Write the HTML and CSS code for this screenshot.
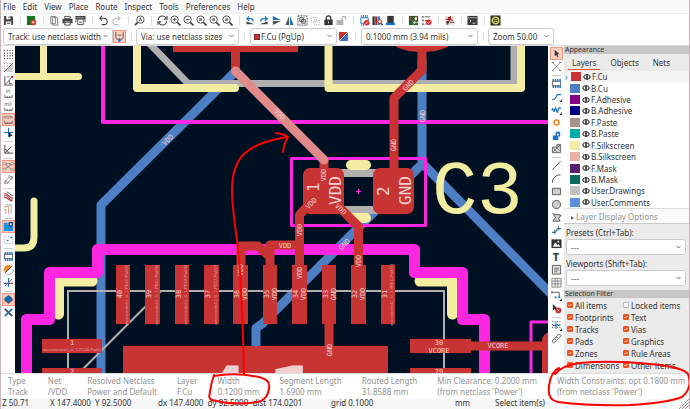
FILE: index.html
```html
<!DOCTYPE html>
<html lang="en">
<head>
    <meta charset="UTF-8">
    <meta name="viewport" content="width=device-width, initial-scale=1.0">
    <title>PCB Editor</title>
    <link rel="stylesheet" href="styles.css">
</head>
<body>
    <!-- icon set -->
    <svg class="sprite" aria-hidden="true">
        <symbol id="save" viewBox="0 0 12 12"><path d="M1 1h8.500L11 2.500V11H1z" fill="#444"/><path d="M3.500 1h4.500v3.500H3.500zM3 7h6v4H3z" fill="#fff"/><path d="M6 1.500h1.200v2H6zM4 8.500h4v1H4z" fill="#444"/></symbol>
        <symbol id="setup" viewBox="0 0 12 12"><path d="M1 1h9v10H1z" fill="#16781f"/><path d="M2 4h3l2 2M2 9h2l1-2" stroke="#062" fill="none"/><circle cx="8" cy="8" r="3.200" fill="#d33"/><circle cx="8" cy="8" r="1.200" fill="#fff"/></symbol>
        <symbol id="page" viewBox="0 0 12 12"><path d="M2 1.500h5v8H2zM4 2.500h5.500v8.500H4z" fill="#fff" stroke="#777"/></symbol>
        <symbol id="print" viewBox="0 0 12 12"><path d="M3 1.500h6V4H3zM3 8h6v3H3z" fill="#fff" stroke="#444"/><path d="M.5 4h11v5H9V7H3v2H.5z" fill="#444"/></symbol>
        <symbol id="plot" viewBox="0 0 12 12"><path d="M.5 1h11v4H.5z" fill="#444"/><path d="M2 3h8" stroke="#fff" stroke-dasharray="1 1"/><path d="M3 5v5.500h6V5M4.500 8h3" fill="none" stroke="#444"/><path d="M1 5v3M11 5v3" stroke="#444"/></symbol>
        <symbol id="undo" viewBox="0 0 12 12"><path d="M4.500 1 2 3.500 4.500 6M2 3.500h4.500a3.500 3.500 0 0 1 0 7H4" fill="none" stroke="#444" stroke-width="1.200"/></symbol>
        <symbol id="redo" viewBox="0 0 12 12"><path d="M7.500 1 10 3.500 7.500 6M10 3.500H5.500a3.500 3.500 0 0 0 0 7H8" fill="none" stroke="#bbb" stroke-width="1.200"/></symbol>
        <symbol id="find" viewBox="0 0 12 12"><circle cx="7" cy="5" r="4" fill="none" stroke="#444"/><path d="M4 8 1 11" stroke="#444" stroke-width="1.800"/><path d="m5.500 7 1.500-4 1.500 4M6 5.500h2" fill="none" stroke="#444" stroke-width=".8"/></symbol>
        <symbol id="refresh" viewBox="0 0 12 12"><path d="M1.500 5.500a4.500 4.500 0 0 1 8.500-2M11 1V4.500H7.500M10.500 6.500A4.500 4.500 0 0 1 2 8.500M1 11V7.500h3.500" fill="none" stroke="#444" stroke-width="1.100"/></symbol>
        <symbol id="lens" viewBox="0 0 12 12"><circle cx="5" cy="5" r="4" fill="none" stroke="#444"/><path d="m8 8 3.500 3.500" stroke="#444" stroke-width="1.800"/></symbol>
        <symbol id="zin" viewBox="0 0 12 12"><use href="#lens"/><path d="M3 5h4M5 3v4" stroke="#444"/></symbol>
        <symbol id="zout" viewBox="0 0 12 12"><use href="#lens"/><path d="M3 5h4" stroke="#444"/></symbol>
        <symbol id="zfit" viewBox="0 0 12 12"><use href="#lens"/><path d="M3.500 3.500h3v3h-3z" fill="#777"/></symbol>
        <symbol id="ccw" viewBox="0 0 12 12"><path d="M1.500 10V7l9 3z" fill="#444"/><path d="M2 4h4a3 3 0 0 1 3 3M4.500 1.500 2 4l2.500 2.500" fill="none" stroke="#1873c7" stroke-width="1.300"/></symbol>
        <symbol id="cw" viewBox="0 0 12 12"><path d="M10.500 10V7l-9 3z" fill="#444"/><path d="M10 4H6a3 3 0 0 0-3 3M7.500 1.500 10 4 7.500 6.500" fill="none" stroke="#1873c7" stroke-width="1.300"/></symbol>
        <symbol id="flipv" viewBox="0 0 12 12"><path d="M2 1v4.500h9z" fill="#1873c7"/><path d="M2 11V6.500h9z" fill="#555"/></symbol>
        <symbol id="fliph" viewBox="0 0 12 12"><path d="M5.500 1v10H1.500z" fill="#555"/><path d="M6.500 1v10h4z" fill="#1873c7"/></symbol>
        <symbol id="group" viewBox="0 0 12 12"><path d="M1 1h10v10H1z" fill="none" stroke="#444" stroke-dasharray="2 1"/><path d="M3 3h4v4H3zM5 5h4v4H5z" fill="#ddd" stroke="#555"/></symbol>
        <symbol id="ungroup" viewBox="0 0 12 12"><path d="M1.500 2.500h6v5h-6zM4.500 5.500h6v5h-6z" fill="none" stroke="#aaa" stroke-dasharray="1 1"/></symbol>
        <symbol id="lock" viewBox="0 0 12 12"><path d="M3.500 6V3.500a2.500 2.500 0 0 1 5 0V6" fill="none" stroke="#333" stroke-width="1.300"/><path d="M1.500 5h9v6h-9z" fill="#333"/><path d="M5.500 7h1v2h-1z" fill="#fff"/></symbol>
        <symbol id="unlock" viewBox="0 0 12 12"><path d="M6.500 6V3.500a2 2 0 0 1 4 0V5" fill="none" stroke="#aaa" stroke-width="1.300"/><path d="M.5 5.500H8V11H.5z" fill="#b4b4b4"/></symbol>
        <symbol id="fpedit" viewBox="0 0 12 12"><path d="M2 3h8v6H2z" fill="#fff" stroke="#1873c7"/><path d="M3 0v3M5 0v3M7 0v3M9 0v3M3 9v3M5 9v3" stroke="#1873c7"/><circle cx="8.500" cy="8.500" r="3" fill="#d22"/><path d="m7 10 3-3" stroke="#fff"/></symbol>
        <symbol id="library" viewBox="0 0 12 12"><path d="M.5 1.500h2.500V11H.5z" fill="#333"/><path d="M3.500 1.500h2V11h-2z" fill="#a22"/><path d="M6 1.500h2.500V11H6z" fill="#1873c7"/><circle cx="8.500" cy="7" r="2" fill="#fff" stroke="#a22"/><path d="m9.500 9 2 2" stroke="#333" stroke-width="1.500"/></symbol>
        <symbol id="update" viewBox="0 0 12 12"><path d="M2.500 1h7v8h-7z" fill="#333"/><path d="M1 8.500h10V11H1z" fill="#1873c7"/></symbol>
        <symbol id="board" viewBox="0 0 12 12"><path d="M1 1h10v10H1z" fill="#285c2a"/><path d="M3 2v3l3 3v3M9 1v4" stroke="#d54" fill="none"/><circle cx="8.500" cy="4" r="1.500" fill="#eee"/><path d="M6 8h5M8 6l-2 2 2 2" stroke="#eee" fill="none"/></symbol>
        <symbol id="drc" viewBox="0 0 12 12"><path d="M1 1h2v2H1zM1 5h2v2H1zM1 9h2v2H1z" fill="#777"/><path d="M4 2h6M4 6h3M4 10h2" stroke="#555"/><circle cx="8.500" cy="8" r="3" fill="#d22"/><path d="m7 8 1.200 1.200L10 7" fill="none" stroke="#fff"/></symbol>
        <symbol id="plugin" viewBox="0 0 12 12"><path d="M1 1h10v10H1z" fill="#e8ddd4"/><path d="M2 5h3l2 3h4M7 1v4l3 1M4 11V8" fill="none" stroke="#823"/><circle cx="6" cy="4" r="2" fill="#a22"/><circle cx="4" cy="8" r="1.500" fill="#333"/></symbol>
        <symbol id="console" viewBox="0 0 12 12"><path d="M.5 1h11v10H.5z" fill="#3c3c3c"/><path d="M1 3h10" stroke="#aaa"/><path d="m3 5 1.500 1.500L3 8M6 9h3" fill="none" stroke="#fff" stroke-width=".8"/></symbol>
        <symbol id="coil" viewBox="0 0 12 12"><path d="M.5.5h11v11H.5z" fill="#24371d"/><circle cx="6" cy="6" r="3.500" fill="none" stroke="#d8c86c" stroke-width="1.800"/><path d="M4 5h4M4 7h4" stroke="#d8c86c"/></symbol>

        <symbol id="grid" viewBox="0 0 12 12"><path d="M1 1.500h10M1 4.500h10M1 7.500h10M1 10.500h10" stroke="#444" stroke-width="1.200" stroke-dasharray="1.200 1.800"/></symbol>
        <symbol id="gridover" viewBox="0 0 12 12"><path d="M11 1v10H1z" fill="#ccc"/><path d="M1 1.500h8M1 4.500h6M1 7.500h3" stroke="#666" stroke-dasharray="1 2"/><path d="M1 11 11 1" stroke="#666"/></symbol>
        <symbol id="polar" viewBox="0 0 12 12"><path d="M2 1v10h9M2 11l7-8" fill="none" stroke="#555"/><path d="M4.500 2h2M7 6v4M7 9.500h3" stroke="#555"/><circle cx="10" cy="2" r="1.300" fill="#d22"/></symbol>
        <symbol id="ruler" viewBox="0 0 12 6"><path d="M1.500 1v3h9V1M4.500 2.500V4M7.500 2.500V4" fill="none" stroke="#555"/></symbol>
        <symbol id="cross" viewBox="0 0 12 12"><path d="M6 1v10M1 6h10" stroke="#1873c7" stroke-width="1.200"/><path d="m6 5 4.500 4.500-2 .2L7 12z" fill="#222"/></symbol>
        <symbol id="angle" viewBox="0 0 12 12"><path d="M2 1v9h9M2 10l7-7M2 6q4 0 4 4" fill="none" stroke="#444"/></symbol>
        <symbol id="rats" viewBox="0 0 12 12"><path d="m2 3 8 7M2 9l8-6M3 3h6" stroke="#666" stroke-width=".8"/><circle cx="2" cy="3" r="1.300" fill="#fff" stroke="#666" stroke-width=".7"/><circle cx="10" cy="3" r="1.300" fill="#fff" stroke="#666" stroke-width=".7"/><circle cx="2" cy="9" r="1.300" fill="#fff" stroke="#666" stroke-width=".7"/><circle cx="10" cy="9.500" r="1.300" fill="#fff" stroke="#666" stroke-width=".7"/></symbol>
        <symbol id="curved" viewBox="0 0 12 12"><path d="M2 10c0-4 5-4 5-9M5 11c0-4 5-4 5-9" fill="none" stroke="#888"/><circle cx="3" cy="9" r="1.500" fill="none" stroke="#888"/><circle cx="9" cy="4" r="1.500" fill="none" stroke="#888"/></symbol>
        <symbol id="contrast" viewBox="0 0 12 12"><path d="M1 3c4-2 5 5 10 5M1 7c3-2 5 4 9 4" fill="none" stroke="#c33" stroke-width="1.300"/><path d="M1 5c4-2 5 5 10 5M4 1c2 0 4 4 7 4" fill="none" stroke="#555"/></symbol>
        <symbol id="netcol" viewBox="0 0 12 12"><path d="M1 3h5v8M1 6h2v5" fill="none" stroke="#e6a08c" stroke-width="1.200"/><path d="M3 1h6v10" fill="none" stroke="#9bb" stroke-width="1.200"/></symbol>
        <symbol id="zone" viewBox="0 0 12 12"><path d="M1 2h4v2h6v7H1z" fill="#1a8fe0"/><path d="M6 1h5v5H6z" fill="#135a93"/><circle cx="8.500" cy="3.500" r="1" fill="#fff"/></symbol>
        <symbol id="zoneout" viewBox="0 0 12 12"><path d="M1.500 2.500h9v8h-9z" fill="none" stroke="#8ac" stroke-dasharray="1 1"/><path d="M4 7h2M8 4h2" stroke="#1873c7" stroke-width="1.500"/></symbol>
        <symbol id="fp" viewBox="0 0 12 12"><path d="M1.500 3.500h9v5h-9z" fill="#fff" stroke="#555"/><path d="M2.500 1v3M5 1v3M7.500 1v3M10 1v3M2.500 8v3M5 8v3M7.500 8v3M10 8v3" stroke="#1873c7" stroke-width="1.500"/></symbol>
        <symbol id="padout" viewBox="0 0 12 12"><path d="M2 9a5 5 0 0 1 8-6z" fill="#f08a24"/><path d="m2 10 8-8" stroke="#444"/><path d="M4 11a5 5 0 0 0 7-6" fill="none" stroke="#999"/></symbol>
        <symbol id="trackout" viewBox="0 0 12 12"><path d="M6 1v10M1 7h10" stroke="#1873c7" stroke-width="1.300"/><path d="m2 10 8-8M7 7h4" stroke="#d44"/></symbol>
        <symbol id="layers" viewBox="0 0 12 12"><path d="m6 4 5 3-5 4-5-4z" fill="#d54"/><path d="m6 1 4.500 3.500v2L6 10 1.500 6.500v-2z" fill="#1368ae"/></symbol>
        <symbol id="tools" viewBox="0 0 12 12"><path d="m2 2 8 8" stroke="#444" stroke-width="1.800"/><path d="m10 2-8 8" stroke="#1873c7" stroke-width="2"/></symbol>

        <symbol id="arrow" viewBox="0 0 12 12"><path d="M4 2v7l2-1.500L7 10l1-.5-1-2.500 2-.5z" fill="#333"/></symbol>
        <symbol id="nets" viewBox="0 0 12 12"><path d="m2 2 8 8M10 2l-8 8" stroke="#777" stroke-width=".8"/><path d="M1 1.500h2M9 1.500h2M1 10.500h2M9 10.500h2" stroke="#555"/></symbol>
        <symbol id="route" viewBox="0 0 12 12"><path d="M1 9h3l3-5h4" fill="none" stroke="#1873c7" stroke-width="1.300"/><path d="M12 9v3H9z" fill="#333"/></symbol>
        <symbol id="tune" viewBox="0 0 12 12"><path d="M1 7c1-6 2 4 3 0s1-4 2 0 1 2 2-1 1-2 3-1" fill="none" stroke="#1873c7" stroke-width="1.400"/><path d="M12 9v3H9z" fill="#333"/></symbol>
        <symbol id="via" viewBox="0 0 12 12"><circle cx="6" cy="6" r="2.700" fill="#fff" stroke="#f08a24" stroke-width="1.800"/></symbol>
        <symbol id="addzone" viewBox="0 0 12 12"><path d="M2 6h3V2h5v5H8v4H2z" fill="#1873c7"/><circle cx="7.500" cy="5" r="1.200" fill="#fff"/></symbol>
        <symbol id="hatch" viewBox="0 0 12 12"><path d="M1.500 4.500h5v-3h4v9h-9z" fill="#ddd" stroke="#666"/><path d="m2 5 5 5M5 4l5 5M7 2l3 3M2 10l8-8" stroke="#555" stroke-width=".8"/></symbol>
        <symbol id="line" viewBox="0 0 12 12"><path d="M1.500 10.500l9-9" stroke="#444"/></symbol>
        <symbol id="arc" viewBox="0 0 12 12"><path d="M1.500 10.500c0-5 4-8.500 9-8.500" fill="none" stroke="#444"/></symbol>
        <symbol id="rect" viewBox="0 0 12 12"><path d="M1.500 2.500h9v7h-9z" fill="#ccc" stroke="#555"/></symbol>
        <symbol id="circle" viewBox="0 0 12 12"><circle cx="6" cy="6" r="4.500" fill="#ccc" stroke="#555"/></symbol>
        <symbol id="poly" viewBox="0 0 12 12"><path d="M2 2l9 1.500L8.500 7l1.500 3H2L5 6z" fill="#ccc" stroke="#555"/></symbol>
        <symbol id="bezier" viewBox="0 0 12 12"><path d="M1 8h3c3 0 1-4 4-4h3" fill="none" stroke="#1873c7" stroke-width="1.200"/><path d="M4 5v5M8 1v5" stroke="#444" stroke-width=".8"/></symbol>
        <symbol id="image" viewBox="0 0 12 12"><path d="M.5 1.500h11V11H.5z" fill="#333"/><path d="m2 9.500 2.500-5L7 8l1.500-1.500L10 9.500z" fill="#fff"/><circle cx="8" cy="4" r="1" fill="#fff"/></symbol>
        <symbol id="textbox" viewBox="0 0 12 12"><path d="M1.500 1.500h9v9.500h-9z" fill="#ddd" stroke="#555"/><path d="M3.500 4.500h5M3.500 6.500h5M3.500 8.500h3" stroke="#555" stroke-width=".8"/></symbol>
        <symbol id="table" viewBox="0 0 12 12"><path d="M1 1.500h10v9.500H1zM1 4.500h10M1 7.500h10M4.500 1.500V11M7.500 1.500V11" fill="#fff" stroke="#666" stroke-width=".8"/></symbol>
        <symbol id="dim" viewBox="0 0 12 12"><path d="M1 2.500h8v6M1 1v3" fill="none" stroke="#555"/><path d="M4 7h2v2H4zM8 7h2v2H8z" fill="#1873c7"/><path d="M12 9v3H9z" fill="#333"/></symbol>
        <symbol id="del" viewBox="0 0 12 12"><path d="M2 1v7l2-1.500L6 9V5z" fill="#333"/><circle cx="8" cy="8" r="3.200" fill="#c22"/><path d="m7 7 2 2M9 7 7 9" stroke="#fff"/></symbol>
        <symbol id="origin" viewBox="0 0 12 12"><path d="M1 2h10M1 5h10M1 8h10" stroke="#444" stroke-dasharray="1.200 1.500"/><path d="M5.500 2v8M2 6h8" stroke="#1873c7"/><path d="M12 9v3H9z" fill="#333"/></symbol>
        <symbol id="measure" viewBox="0 0 12 12"><path d="m1 9 8-8L11 3l-8 8z" fill="#fff" stroke="#444"/><path d="m4 6.500 1 1M6 4.500l1 1" stroke="#444"/></symbol>
        <symbol id="eye" viewBox="0 0 12 12"><path d="M1 6c2-5 8-5 10 0-2 5-8 5-10 0z" fill="#fff" stroke="#333" stroke-width="1.600"/><path d="M6 2.500v7" stroke="#333" stroke-width="2.500"/></symbol>
    </svg>

    <div class="app">
        <nav class="menubar">
            <button>File</button><button>Edit</button><button>View</button><button>Place</button><button>Route</button><button>Inspect</button><button>Tools</button><button>Preferences</button><button>Help</button>
        </nav>

        <div class="toolbar">
            <button class="tool"><svg><use href="#save"/></svg></button>
            <i class="sep"></i>
            <button class="tool"><svg><use href="#setup"/></svg></button>
            <i class="sep"></i>
            <button class="tool"><svg><use href="#page"/></svg></button>
            <button class="tool"><svg><use href="#print"/></svg></button>
            <button class="tool"><svg><use href="#plot"/></svg></button>
            <i class="sep"></i>
            <button class="tool"><svg><use href="#undo"/></svg></button>
            <button class="tool"><svg><use href="#redo"/></svg></button>
            <i class="sep"></i>
            <button class="tool"><svg><use href="#find"/></svg></button>
            <i class="sep"></i>
            <button class="tool"><svg><use href="#refresh"/></svg></button>
            <button class="tool"><svg><use href="#zin"/></svg></button>
            <button class="tool"><svg><use href="#zout"/></svg></button>
            <button class="tool"><svg><use href="#zfit"/></svg></button>
            <button class="tool"><svg><use href="#zfit"/></svg></button>
            <button class="tool"><svg><use href="#zfit"/></svg></button>
            <i class="sep"></i>
            <button class="tool"><svg><use href="#ccw"/></svg></button>
            <button class="tool"><svg><use href="#cw"/></svg></button>
            <button class="tool"><svg><use href="#flipv"/></svg></button>
            <button class="tool"><svg><use href="#fliph"/></svg></button>
            <button class="tool"><svg><use href="#group"/></svg></button>
            <button class="tool"><svg><use href="#ungroup"/></svg></button>
            <button class="tool"><svg><use href="#lock"/></svg></button>
            <button class="tool"><svg><use href="#unlock"/></svg></button>
            <i class="sep"></i>
            <button class="tool"><svg><use href="#fpedit"/></svg></button>
            <button class="tool"><svg><use href="#library"/></svg></button>
            <button class="tool"><svg><use href="#update"/></svg></button>
            <i class="sep"></i>
            <button class="tool"><svg><use href="#board"/></svg></button>
            <button class="tool"><svg><use href="#drc"/></svg></button>
            <i class="sep"></i>
            <button class="tool"><svg><use href="#plugin"/></svg></button>
            <i class="sep"></i>
            <button class="tool"><svg><use href="#console"/></svg></button>
            <i class="sep"></i>
            <button class="tool"><svg><use href="#coil"/></svg></button>
        </div>

        <div class="optionbar">
            <select class="track-select" aria-label="Track width"><option>Track: use netclass width</option></select>
            <button class="tool active"><svg viewBox="0 0 12 12"><path d="M2 1v6q0 2 2 2h4q2 0 2-2V1M4 4.500h4" fill="none" stroke="#555"/><path d="M6 8v4M4.500 10.500h3" stroke="#1873c7" stroke-width="1.300"/></svg></button>
            <i class="sep"></i>
            <select class="via-select" aria-label="Via size"><option>Via: use netclass sizes</option></select>
            <i class="sep wide"></i>
            <span class="layer-field">
                <i class="layer-swatch"></i>
                <select class="layer-select" aria-label="Active layer"><option>F.Cu (PgUp)</option></select>
            </span>
            <button class="tool"><svg viewBox="0 0 12 12"><path d="M1 1h10L1 11z" fill="#c83434"/><path d="M11 1v10H1z" fill="#3d74bd"/><path d="M11 1 1 11" stroke="#ddd"/></svg></button>
            <i class="sep wide"></i>
            <select class="grid-select" aria-label="Grid"><option>0.1000 mm (3.94 mils)</option></select>
            <i class="sep"></i>
            <select class="zoom-select" aria-label="Zoom"><option>Zoom 50.00</option></select>
        </div>

        <main class="workspace">
            <div class="sidebar left">
                <button class="tool"><svg><use href="#grid"/></svg></button>
                <button class="tool"><svg><use href="#gridover"/></svg></button>
                <button class="tool"><svg><use href="#polar"/></svg></button>
                <button class="tool unit">in<svg><use href="#ruler"/></svg></button>
                <button class="tool unit">mil<svg><use href="#ruler"/></svg></button>
                <button class="tool unit active">mm<svg><use href="#ruler"/></svg></button>
                <button class="tool"><svg><use href="#cross"/></svg></button>
                <i class="rule"></i>
                <button class="tool"><svg><use href="#angle"/></svg></button>
                <i class="rule"></i>
                <button class="tool active"><svg><use href="#rats"/></svg></button>
                <button class="tool"><svg><use href="#curved"/></svg></button>
                <i class="rule"></i>
                <button class="tool"><svg><use href="#contrast"/></svg></button>
                <button class="tool"><svg><use href="#netcol"/></svg></button>
                <i class="rule"></i>
                <button class="tool active"><svg><use href="#zone"/></svg></button>
                <button class="tool"><svg><use href="#zoneout"/></svg></button>
                <i class="rule"></i>
                <button class="tool"><svg><use href="#fp"/></svg></button>
                <button class="tool"><svg><use href="#padout"/></svg></button>
                <button class="tool"><svg><use href="#trackout"/></svg></button>
                <i class="rule"></i>
                <button class="tool active"><svg><use href="#layers"/></svg></button>
                <button class="tool"><svg><use href="#tools"/></svg></button>
            </div>

            <svg class="board" viewBox="15 46 533 327" preserveAspectRatio="xMinYMin slice">
                <!-- back copper -->
                <g class="b-cu">
                    <path d="M235 72 101 205V380"/>
                    <path d="M422 60V164L262 324 256 328V350"/>
                    <path d="m422 163 130 132"/>
                </g>
                <!-- fabrication outlines -->
                <g class="fab">
                    <path d="M148 42 188 83.500H514V40" stroke-width="7"/>
                    <path d="M335 173h45M335 210h45" stroke-width="8"/>
                    <path d="M68 380V291H444V380M83 369l78-78" stroke-width="2"/>
                </g>
                <!-- silkscreen -->
                <g class="silk">
                    <path d="M43.500 40V76M10 76.500H78.500M34 201V237Q34 248 24 248H10" stroke-width="7"/>
                    <path d="M137 40V88H235M328.500 40V88H521V40" stroke-width="8"/>
                    <path d="M351 165h15M351 218h15" stroke-width="10"/>
                    <path d="M92 281H58.500V314M420 281H452.500V314" stroke-width="11"/>
                    <text class="ref" x="432 477" y="213">C3</text>
                </g>
                <!-- courtyards -->
                <g class="court">
                    <path d="M103 40V122H555" stroke-width="4"/>
                    <path d="M291.500 158.500H425.500V225.500H291.500zM531 380V322H555" stroke-width="3"/>
                    <path d="M26.500 380V319.500H49.500V272.500H97.500V249.500H414.500V272.500H462.500V319.500H484.500V380" stroke-width="11"/>
                    <path d="M356 191.500h5M358.500 189v5" stroke-width="1"/>
                </g>
                <!-- front copper -->
                <g class="f-cu">
                    <path d="M173 40H298V52H173z"/>
                    <ellipse cx="422" cy="42" rx="29" ry="10"/>
                    <rect x="303" y="168" width="41" height="46" rx="7"/>
                    <rect x="373" y="168" width="41" height="46" rx="7"/>
                    <path d="M116 265h14v59h-14zM145 265h15v59h-15zM175 265h14v59h-14zM204 265h15v59h-15zM233 265h15v59h-15zM263 265h14v59h-14zM292 265h15v59h-15zM322 265h14v59h-14zM351 265h15v59h-15zM381 265h14v59h-14z"/>
                    <path d="M42 339h60v14H42zM42 368h60v14H42zM410 339h61v14h-61zM410 368h61v14h-61zM123 346H388V380H123z"/>
                    <rect x="542" y="332" width="30" height="60" rx="9"/>
                    <g class="f-track">
                        <path d="M235.500 40V70M422 40V70L394 98V175M324 160V175M310 203 299.500 215V270M338 206l20.500 20.500V268M299.500 245H270V270M241 270V246H258l12 11M329 320V352M465 346H550"/>
                    </g>
                </g>
                <path class="selected" d="m235.500 71 88.500 89"/>

                <!-- net names and pad numbers -->
                <g class="netname">
                    <text class="huge" x="191 263" y="441">41</text>
                    <g class="big">
                        <text transform="translate(319 187) rotate(-90)" x="-5" y="0">1</text>
                        <text transform="translate(341 191) rotate(-90)" x="-14" y="0">VDD</text>
                        <text transform="translate(389 191) rotate(-90)" x="-5" y="0">2</text>
                        <text transform="translate(411 191) rotate(-90)" x="-14" y="0">GND</text>
                    </g>
                    <g text-anchor="middle">
                        <text transform="translate(169.500 141.500) rotate(-45)">VDD</text>
                        <text transform="translate(278 116) rotate(45)">VDD</text>
                        <text transform="translate(410 87) rotate(-45)">GND</text>
                        <text transform="translate(424.500 116) rotate(-90)">GND</text>
                        <text transform="translate(396 145) rotate(-90)">GND</text>
                        <text transform="translate(326 175) rotate(-90)">VDD</text>
                        <text transform="translate(313 205) rotate(-45)">VDD</text>
                        <text transform="translate(339 211) rotate(45)">VDD</text>
                        <text transform="translate(302 230) rotate(-90)">VDD</text>
                        <text transform="translate(346 246) rotate(-45)">GND</text>
                        <text x="285" y="248">VDD</text>
                        <text transform="translate(361 261) rotate(-90)">VDD</text>
                        <text transform="translate(302 273) rotate(-90)">VDD</text>
                        <text transform="translate(243 270) rotate(-90)">VDD</text>
                        <text transform="translate(331.500 350) rotate(-90)">GND</text>
                        <text x="498" y="348">VCORE</text>
                        <text x="439" y="353">VCORE</text>
                        <text x="439" y="345">30</text>
                        <text x="439" y="374">29</text>
                        <text x="72" y="345">1</text>
                        <text x="72" y="374">2</text>
                        <text transform="translate(122 294) rotate(-90)">40</text>
                        <text transform="translate(151 294) rotate(-90)">39</text>
                        <text transform="translate(181 294) rotate(-90)">38</text>
                        <text transform="translate(210 294) rotate(-90)">37</text>
                        <text transform="translate(239 294) rotate(-90)">36</text>
                        <text transform="translate(247 294) rotate(-90)">VDD</text>
                        <text transform="translate(269 294) rotate(-90)">35</text>
                        <text transform="translate(277 294) rotate(-90)">VDD</text>
                        <text transform="translate(298 294) rotate(-90)">34</text>
                        <text transform="translate(306 294) rotate(-90)">VDD</text>
                        <text transform="translate(328 294) rotate(-90)">33</text>
                        <text transform="translate(336 294) rotate(-90)">GND</text>
                        <text transform="translate(357 294) rotate(-90)">32</text>
                        <text transform="translate(365 294) rotate(-90)">VDD</text>
                        <text transform="translate(387 294) rotate(-90)">31</text>
                    </g>
                    <g class="tiny" text-anchor="middle">
                        <text x="72" y="351">unconnected-(_U_1-PC00-Pad1)</text>
                        <text transform="translate(128 295) rotate(-90)">unconnected-(_U_1-PD00-Pad40)</text>
                        <text transform="translate(158 295) rotate(-90)">unconnected-(_U_1-PD01-Pad39)</text>
                        <text transform="translate(187 295) rotate(-90)">unconnected-(_U_1-PD02-Pad38)</text>
                        <text transform="translate(217 295) rotate(-90)">unconnected-(_U_1-PD03-Pad37)</text>
                        <text transform="translate(393 295) rotate(-90)">unconnected-(_U_1-VREG-Pad31)</text>
                    </g>
                </g>
            </svg>

            <div class="sidebar right">
                <button class="tool active"><svg><use href="#arrow"/></svg></button>
                <button class="tool"><svg><use href="#nets"/></svg></button>
                <i class="rule"></i>
                <button class="tool"><svg><use href="#fp"/></svg></button>
                <button class="tool"><svg><use href="#route"/></svg></button>
                <button class="tool"><svg><use href="#tune"/></svg></button>
                <button class="tool"><svg><use href="#via"/></svg></button>
                <button class="tool"><svg><use href="#addzone"/></svg></button>
                <button class="tool"><svg><use href="#hatch"/></svg></button>
                <i class="rule"></i>
                <button class="tool"><svg><use href="#line"/></svg></button>
                <button class="tool"><svg><use href="#arc"/></svg></button>
                <button class="tool"><svg><use href="#rect"/></svg></button>
                <button class="tool"><svg><use href="#circle"/></svg></button>
                <button class="tool"><svg><use href="#poly"/></svg></button>
                <button class="tool"><svg><use href="#bezier"/></svg></button>
                <button class="tool"><svg><use href="#image"/></svg></button>
                <button class="tool letter">T</button>
                <button class="tool"><svg><use href="#textbox"/></svg></button>
                <button class="tool"><svg><use href="#table"/></svg></button>
                <button class="tool"><svg><use href="#dim"/></svg></button>
                <button class="tool"><svg><use href="#del"/></svg></button>
                <i class="rule"></i>
                <button class="tool"><svg><use href="#origin"/></svg></button>
                <button class="tool"><svg><use href="#measure"/></svg></button>
            </div>

            <aside class="panel">
                <h2>Appearance</h2>
                <div class="tabs">
                    <button class="tab current">Layers</button>
                    <button class="tab">Objects</button>
                    <button class="tab">Nets</button>
                </div>
                <ul class="layers">
                    <li class="current"><i class="swatch f-copper"></i><svg><use href="#eye"/></svg>F.Cu</li>
                    <li><i class="swatch b-copper"></i><svg><use href="#eye"/></svg>B.Cu</li>
                    <li><i class="swatch f-adhesive"></i><svg><use href="#eye"/></svg>F.Adhesive</li>
                    <li><i class="swatch b-adhesive"></i><svg><use href="#eye"/></svg>B.Adhesive</li>
                    <li><i class="swatch f-paste"></i><svg><use href="#eye"/></svg>F.Paste</li>
                    <li><i class="swatch b-paste"></i><svg><use href="#eye"/></svg>B.Paste</li>
                    <li><i class="swatch f-silk"></i><svg><use href="#eye"/></svg>F.Silkscreen</li>
                    <li><i class="swatch b-silk"></i><svg><use href="#eye"/></svg>B.Silkscreen</li>
                    <li><i class="swatch f-mask"></i><svg><use href="#eye"/></svg>F.Mask</li>
                    <li><i class="swatch b-mask"></i><svg><use href="#eye"/></svg>B.Mask</li>
                    <li><i class="swatch drawings"></i><svg><use href="#eye"/></svg>User.Drawings</li>
                    <li><i class="swatch comments"></i><svg><use href="#eye"/></svg>User.Comments</li>
                </ul>
                <button class="display-options">Layer Display Options</button>
                <div class="field">
                    <label for="presets">Presets (Ctrl+Tab):</label>
                    <select id="presets"><option>---</option></select>
                </div>
                <div class="field">
                    <label for="viewports">Viewports (Shift+Tab):</label>
                    <select id="viewports"><option>---</option></select>
                </div>
                <h2>Selection Filter</h2>
                <div class="filter">
                    <label><input type="checkbox" checked>All items</label>
                    <label><input type="checkbox">Locked items</label>
                    <label><input type="checkbox" checked>Footprints</label>
                    <label><input type="checkbox" checked>Text</label>
                    <label><input type="checkbox" checked>Tracks</label>
                    <label><input type="checkbox" checked>Vias</label>
                    <label><input type="checkbox" checked>Pads</label>
                    <label><input type="checkbox" checked>Graphics</label>
                    <label><input type="checkbox" checked>Zones</label>
                    <label><input type="checkbox" checked>Rule Areas</label>
                    <label><input type="checkbox" checked>Dimensions</label>
                    <label><input type="checkbox" checked>Other items</label>
                </div>
            </aside>
        </main>

        <div class="infobar">
            <div>Type<br>Track</div>
            <div>Net<br>/VDD</div>
            <div>Resolved Netclass<br>Power and Default</div>
            <div>Layer<br>F.Cu</div>
            <div>Width<br>0.1200 mm</div>
            <div>Segment Length<br>1.6900 mm</div>
            <div>Routed Length<br>31.8588 mm</div>
            <div>Min Clearance: 0.2000 mm<br>(from netclass 'Power')</div>
            <div>Width Constraints: opt 0.1800 mm<br>(from netclass 'Power')</div>
        </div>

        <footer class="statusbar">
            <span class="st-zoom">Z 50.71</span>
            <span class="st-pos">X 147.4000&nbsp; Y 92.5000</span>
            <span class="st-delta">dx 147.4000&nbsp; dy 92.5000&nbsp; dist 174.0201</span>
            <span class="st-grid">grid 0.1000</span>
            <span class="st-unit">mm</span>
            <span>Select item(s)</span>
            <svg class="grip" viewBox="0 0 10 10"><path d="m0 10 10-10M3 10l7-7M6 10l4-4" stroke="#999"/></svg>
        </footer>

        <!-- hand-drawn markup -->
        <svg class="markup" viewBox="0 0 690 409" preserveAspectRatio="none">
            <path d="M244 374Q243 320 240 272C239 245 232 215 232 190Q232 165 245 153 257 142 287 137M276 133q8 1 12 4-4 6-5 15"/>
            <path d="M214 376Q235 372 259 377 271 380 269 388 268 400 257 402 235 406 212 400 208 399 210 392q1-9 4-17"/>
            <path d="M559 368Q551 371 549 386 547 400 558 402 590 406 630 405 666 403 682 397 693 388 688 374 683 367 650 364 610 360 580 363 563 365 555 374"/>
        </svg>
    </div>
</body>
</html>
```

FILE: styles.css
```css
* {
    margin: 0;
    padding: 0;
    box-sizing: border-box;
}

body {
    font-family: "Noto Sans", "Open Sans", sans-serif;
    font-size: 8px;
    line-height: 11px;
    color: #333;
}

button,
select,
input {
    font: inherit;
    color: inherit;
}

button {
    border: none;
    background: none;
}

.sprite {
    display: none;
}

.app {
    position: relative;
    display: flex;
    flex-direction: column;
    height: 100vh;
    overflow: hidden;
    background: #fff;
    border-left: 1px solid #cbb2bb;
    border-right: 1px solid #cbb2bb;
}

/* menu and toolbars */
.menubar {
    display: flex;
    gap: 7px;
    height: 14px;
    padding-left: 2px;
    background: #fafafa;
    border-bottom: 1px solid #eee;
}

.toolbar {
    display: flex;
    align-items: center;
    height: 13px;
    padding-left: 1px;
}

.tool {
    flex: none;
    display: flex;
    align-items: center;
    justify-content: center;
    width: 13px;
    height: 13px;
}

.tool svg {
    width: 11px;
    height: 11px;
}

.tool.active {
    background: #fbcdbf;
    border: 1px solid #ef9a80;
}

.sep {
    flex: none;
    width: 10px;
    height: 9px;
    background: linear-gradient(#ddd, #ddd) center / 1px 100% no-repeat;
}

.sep.wide {
    width: 11px;
}

.optionbar {
    display: flex;
    align-items: center;
    height: 19px;
    padding-left: 2px;
    border-bottom: 1px solid #ddd;
}

select {
    appearance: none;
    height: 17px;
    padding: 0 10px 0 4px;
    border: 1px solid #ccc;
    border-radius: 3px;
    background: #fff url("data:image/svg+xml,%3Csvg xmlns='http://www.w3.org/2000/svg' width='5' height='4'%3E%3Cpath d='M.5 1l2 2 2-2' fill='none' stroke='%23555' stroke-width='.8'/%3E%3C/svg%3E") right 4px center no-repeat;
}

.track-select {
    width: 110px;
}

.via-select {
    width: 103px;
}

.layer-field {
    position: relative;
    display: flex;
}

.layer-swatch {
    position: absolute;
    left: 4px;
    top: 6px;
    width: 6px;
    height: 6px;
    background: #c83434;
    border: 1px solid #822;
}

.layer-select {
    width: 87px;
    padding-left: 10px;
}

.grid-select {
    width: 117px;
}

.zoom-select {
    width: 66px;
}

/* workspace */
.workspace {
    flex: 1;
    display: flex;
    min-height: 0;
}

.sidebar {
    flex: none;
    display: flex;
    flex-direction: column;
    align-items: center;
    padding-top: 1px;
    background: #fff;
}

.sidebar.left {
    width: 14px;
    padding-top: 2px;
}

.sidebar.right {
    width: 16px;
}

.rule {
    flex: none;
    width: 9px;
    height: 4px;
    background: linear-gradient(#ccc, #ccc) center / 100% 1px no-repeat;
}

.unit {
    flex-direction: column;
    font-size: 5px;
    line-height: 5px;
    color: #555;
}

.unit svg {
    height: 5px;
}

.letter {
    font-size: 11px;
    font-weight: bold;
}

/* board */
.board {
    display: block;
    flex: 1;
    min-width: 0;
    height: 100%;
    background: #001023;
}

.b-cu {
    fill: none;
    stroke: #4d7fc4;
    stroke-width: 9;
    stroke-linejoin: round;
}

.fab {
    fill: none;
    stroke: #afafaf;
}

.silk {
    fill: none;
    stroke: #f2eda1;
    stroke-linecap: round;
    stroke-linejoin: round;
}

.ref {
    font: 76px "Liberation Mono", monospace;
    fill: #f2eda1;
    stroke: none;
}

.court {
    fill: none;
    stroke: #ff26e2;
    stroke-linejoin: round;
}

.f-cu {
    fill: #c83434;
}

.f-track {
    fill: none;
    stroke: #c83434;
    stroke-width: 9;
    stroke-linejoin: round;
    stroke-linecap: round;
}

.selected {
    fill: none;
    stroke: #e18a8a;
    stroke-width: 9;
    stroke-linecap: round;
}

.netname {
    font: 7px "DejaVu Sans Mono", monospace;
    fill: #f0d0d0;
}

.netname .big {
    font-size: 16px;
}

.netname .huge {
    font-size: 104px;
}

.netname .tiny {
    font: 4px "Liberation Sans", sans-serif;
    fill: #e3a0a0;
}

/* appearance panel */
.panel {
    flex: none;
    display: flex;
    flex-direction: column;
    width: 125px;
    background: #ebebeb;
}

h2 {
    height: 8px;
    padding-left: 1px;
    font-size: 7px;
    line-height: 8px;
    font-weight: normal;
    background: #c6c6c6;
}

.tabs {
    display: flex;
    gap: 6px;
    padding: 0 4px;
    margin-bottom: 1px;
}

.tab {
    height: 16px;
    padding: 2px 4px 0;
    border-bottom: 1px solid transparent;
}

.tab.current {
    border-bottom-color: #e95420;
}

.layers {
    display: flex;
    flex-direction: column;
    height: 137px;
    background: #fff;
    list-style: none;
}

.layers li {
    flex: 1;
    display: flex;
    align-items: center;
    padding-left: 6px;
}

.layers li.current {
    padding-left: 0;
    background: #f3f3f3;
}

.layers li.current::before {
    content: "›";
    width: 6px;
    padding-left: 1px;
    color: #1873c7;
}

.layers svg {
    width: 8px;
    height: 8px;
    margin: 0 1px 0 2px;
}

.swatch {
    width: 10px;
    height: 9px;
}

.f-copper { background: #c83434; }
.b-copper { background: #4d7fc4; }
.f-adhesive { background: #840084; }
.b-adhesive { background: #000084; }
.f-paste { background: #a6918b; }
.b-paste { background: #00abab; }
.f-silk { background: #f2eda1; }
.b-silk { background: #e8b2a7; }
.f-mask { background: #571f6e; }
.b-mask { background: #0b6a5e; }
.drawings { background: #c2c2c2; }
.comments { background: #598fdc; }

.display-options {
    height: 16px;
    padding-left: 5px;
    text-align: left;
    color: #999;
    background: #fafafa;
    border-top: 1px solid #ddd;
    border-bottom: 1px solid #ccc;
}

.display-options::before {
    content: "";
    display: inline-block;
    margin: 0 2px 0 2px;
    border: 2px solid transparent;
    border-left: 3px solid #666;
    border-right: none;
}

.field {
    display: flex;
    flex-direction: column;
    padding: 3px 3px 0 2px;
}

.field label {
    height: 12px;
}

.field select {
    height: 16px;
    color: #555;
}

.field + h2 {
    margin-top: 4px;
}

.filter {
    display: grid;
    grid-template-columns: 56px 1fr;
    padding: 1px 3px 0;
}

.filter label {
    display: flex;
    align-items: center;
    gap: 2px;
    height: 12px;
    white-space: nowrap;
}

.filter input {
    appearance: none;
    width: 6px;
    height: 6px;
    border: 1px solid #bbb;
    border-radius: 1px;
    background: #fff;
}

.filter input:checked {
    border-color: #e95420;
    background: #e95420 url("data:image/svg+xml,%3Csvg xmlns='http://www.w3.org/2000/svg' viewBox='0 0 4 4'%3E%3Cpath d='M.5 2l1 1 2-2' fill='none' stroke='white' stroke-width='.8'/%3E%3C/svg%3E");
}

/* bottom bars */
.infobar {
    display: flex;
    gap: 20px;
    height: 26px;
    padding: 1px 0 0 7px;
    border-top: 1px solid #ddd;
    background: #fff;
    color: #929292;
    white-space: nowrap;
}

.statusbar {
    display: flex;
    height: 10px;
    padding-left: 1px;
    line-height: 8px;
    background: #f6f6f6;
    white-space: nowrap;
}

.st-zoom { width: 48px; }
.st-pos { width: 108px; }
.st-delta { width: 173px; }
.st-grid { width: 124px; }
.st-unit { width: 40px; }

.grip {
    width: 10px;
    height: 10px;
    margin-left: auto;
}

/* markup drawn over the whole window */
.markup {
    position: absolute;
    left: -1px;
    top: 0;
    width: 100vw;
    height: 100vh;
    fill: none;
    stroke: #f00;
    stroke-width: 2;
    stroke-linecap: round;
    pointer-events: none;
}
```
